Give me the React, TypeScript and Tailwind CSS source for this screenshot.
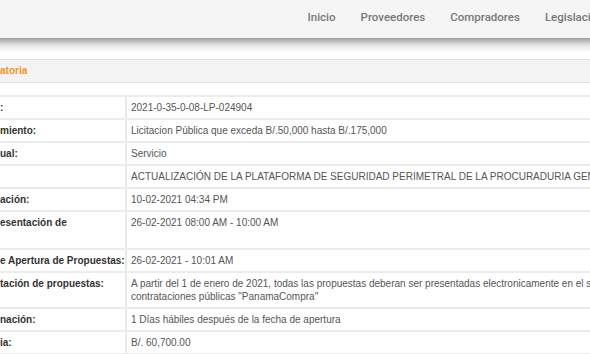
import React from 'react';

const navItems = ['Inicio', 'Proveedores', 'Compradores', 'Legislación'];

const rows: { label: string; value: React.ReactNode; tall?: boolean }[] = [
  { label: ':', value: '2021-0-35-0-08-LP-024904' },
  { label: 'miento:', value: 'Licitacion Pública que exceda B/.50,000 hasta B/.175,000' },
  { label: 'ual:', value: 'Servicio' },
  { label: '', value: 'ACTUALIZACIÓN DE LA PLATAFORMA DE SEGURIDAD PERIMETRAL DE LA PROCURADURIA GENERAL DE LA NACION' },
  { label: 'ación:', value: '10-02-2021 04:34 PM' },
  { label: 'esentación de', value: '26-02-2021 08:00 AM - 10:00 AM', tall: true },
  { label: 'e Apertura de Propuestas:', value: '26-02-2021 - 10:01 AM' },
  {
    label: 'tación de propuestas:',
    value: (
      <>
        A partir del 1 de enero de 2021, todas las propuestas deberan ser presentadas electronicamente en el sistema de
        <br />
        contrataciones públicas "PanamaCompra"
      </>
    ),
  },
  { label: 'nación:', value: '1 Días hábiles después de la fecha de apertura' },
  { label: 'ia:', value: 'B/. 60,700.00' },
];

export default function App() {
  return (
    <div className="w-[590px] h-[354px] overflow-hidden bg-white font-['Liberation_Sans',Arial,sans-serif]">
      <div className="h-[38px] bg-[#f5f5f5] flex items-center pl-[295px] pb-[3px] whitespace-nowrap">
        {navItems.map((item) => (
          <span
            key={item}
            className="px-[12.5px] text-[11.5px] font-medium text-[#777] font-['Roboto',sans-serif]"
          >
            {item}
          </span>
        ))}
      </div>
      <div className="h-[14px] bg-gradient-to-b from-[#9c9c9c] via-[#e4e4e4] to-white" />
      <div className="h-[7px]" />
      <div className="h-[24px] bg-[#f3f3f3] border-t border-b border-[#e3e3e3] flex items-center">
        <span className="text-[10px] font-bold text-[#f5921f] leading-none">atoria</span>
      </div>
      <div className="h-[12px]" />
      <div className="border-t-2 border-[#ececec]">
        {rows.map((row, i) => (
          <div
            key={i}
            className={`grid grid-cols-[127px_1fr] border-b-2 border-[#ececec] ${row.tall ? 'h-[38px]' : ''}`}
          >
            <div className="border-r-2 border-[#e8e8e8] py-[4px] text-[10px] leading-[13px] font-bold text-[#333] whitespace-nowrap overflow-hidden">
              {row.label}
            </div>
            <div className="pl-[4px] py-[4px] text-[10px] leading-[13px] text-[#555] whitespace-nowrap">
              {row.value}
            </div>
          </div>
        ))}
      </div>
    </div>
  );
}
